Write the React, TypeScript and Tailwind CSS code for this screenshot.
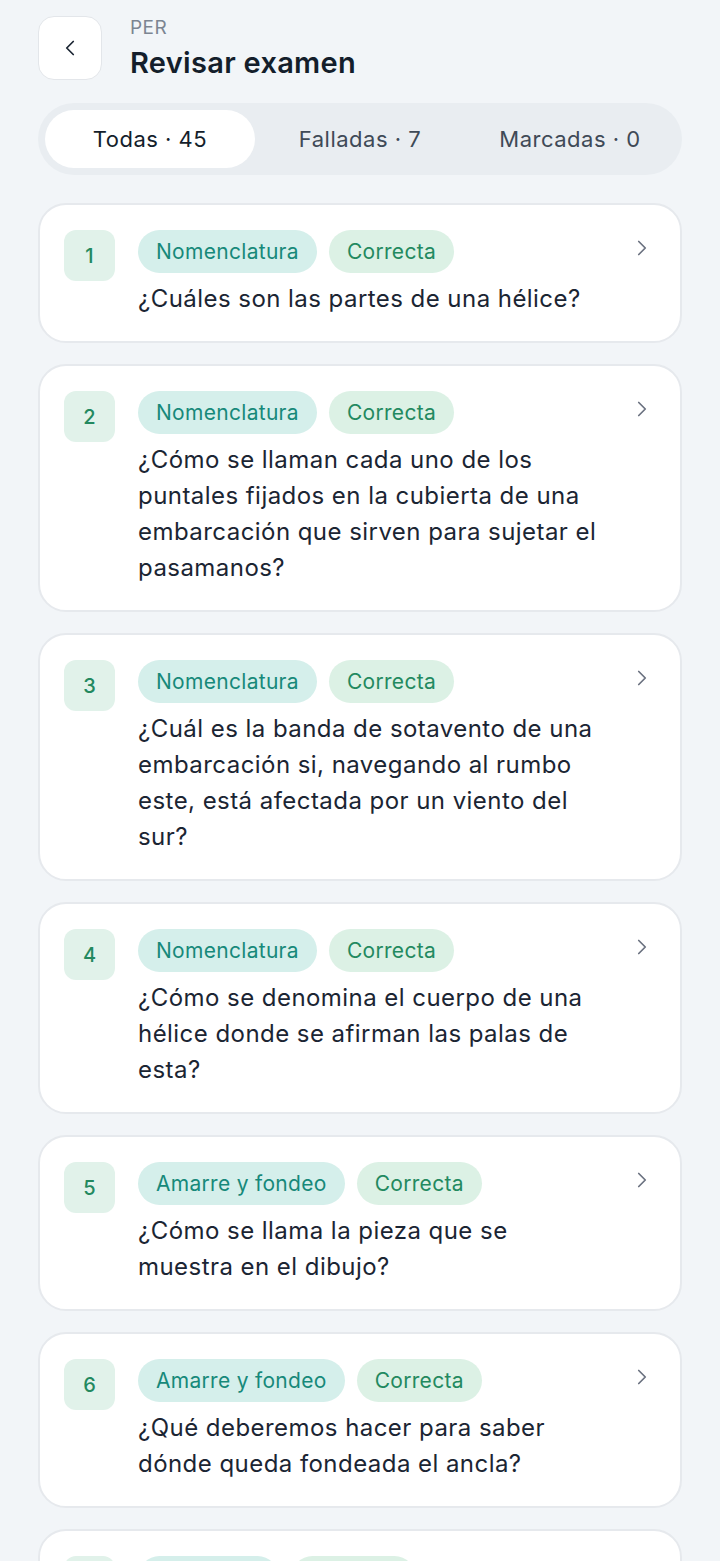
import { ChevronLeft, ChevronRight } from "lucide-react";

const questions = [
  { n: 1, topic: "Nomenclatura", text: "¿Cuáles son las partes de una hélice?" },
  {
    n: 2,
    topic: "Nomenclatura",
    text: "¿Cómo se llaman cada uno de los puntales fijados en la cubierta de una embarcación que sirven para sujetar el pasamanos?",
  },
  {
    n: 3,
    topic: "Nomenclatura",
    text: "¿Cuál es la banda de sotavento de una embarcación si, navegando al rumbo este, está afectada por un viento del sur?",
  },
  {
    n: 4,
    topic: "Nomenclatura",
    text: "¿Cómo se denomina el cuerpo de una hélice donde se afirman las palas de esta?",
  },
  { n: 5, topic: "Amarre y fondeo", text: "¿Cómo se llama la pieza que se muestra en el dibujo?" },
  { n: 6, topic: "Amarre y fondeo", text: "¿Qué deberemos hacer para saber dónde queda fondeada el ancla?" },
  { n: 7, topic: "Seguridad", text: "¿Qué elementos de seguridad son obligatorios a bordo?" },
];

function QuestionCard({ n, topic, text }: { n: number; topic: string; text: string }) {
  return (
    <div className="flex rounded-[28px] border-2 border-[#e6e9ed] bg-white pb-[24px] pl-[24px] pr-[25px] pt-[25px]">
      <div className="flex h-[51px] w-[51px] shrink-0 items-center justify-center rounded-[12px] bg-[#e1f2ea] text-[20px] font-medium text-[#23895f]">
        {n}
      </div>
      <div className="ml-[23px] flex-1 pr-[28px]">
        <div className="flex gap-3">
          <span className="flex h-[43px] items-center rounded-full bg-[#d5efeb] px-[18px] text-[21px] tracking-[0.3px] text-[#17897a]">
            {topic}
          </span>
          <span className="flex h-[43px] items-center rounded-full bg-[#dcf1e5] px-[18px] text-[21px] tracking-[0.3px] text-[#23895f]">
            Correcta
          </span>
        </div>
        <p className="mt-[8px] text-[24px] leading-[36px] tracking-[0.45px] text-[#1b2533]">{text}</p>
      </div>
      <ChevronRight className="mt-[5px] h-[26px] w-[26px] shrink-0 text-[#6b7280]" strokeWidth={1.6} />
    </div>
  );
}

export default function App() {
  return (
    <div className="min-h-screen bg-[#f2f5f8] px-[38px] pt-[16px] font-['Inter',sans-serif]">
      <header className="flex items-start gap-[28px]">
        <button className="flex h-[64px] w-[64px] items-center justify-center rounded-[16px] border border-[#e3e6ea] bg-white text-[#1b2533]">
          <ChevronLeft className="h-[26px] w-[26px]" strokeWidth={1.6} />
        </button>
        <div>
          <div className="text-[19px] leading-[24px] tracking-wide text-[#7c8592]">PER</div>
          <h1 className="mt-[5px] text-[29px] font-semibold leading-[36px] tracking-[0.3px] text-[#141e2b]">
            Revisar examen
          </h1>
        </div>
      </header>

      <nav className="mt-[22px] grid grid-cols-3 rounded-full bg-[#e9edf1] p-[7px] text-[22px] tracking-[0.5px]">
        <div className="flex h-[58px] items-center justify-center rounded-full bg-white text-[#141e2b]">Todas · 45</div>
        <div className="flex h-[58px] items-center justify-center text-[#3f4a57]">Falladas · 7</div>
        <div className="flex h-[58px] items-center justify-center text-[#3f4a57]">Marcadas · 0</div>
      </nav>

      <main className="mt-[28px] flex flex-col gap-[21px] pb-8">
        {questions.map((q) => (
          <QuestionCard key={q.n} {...q} />
        ))}
      </main>
    </div>
  );
}
